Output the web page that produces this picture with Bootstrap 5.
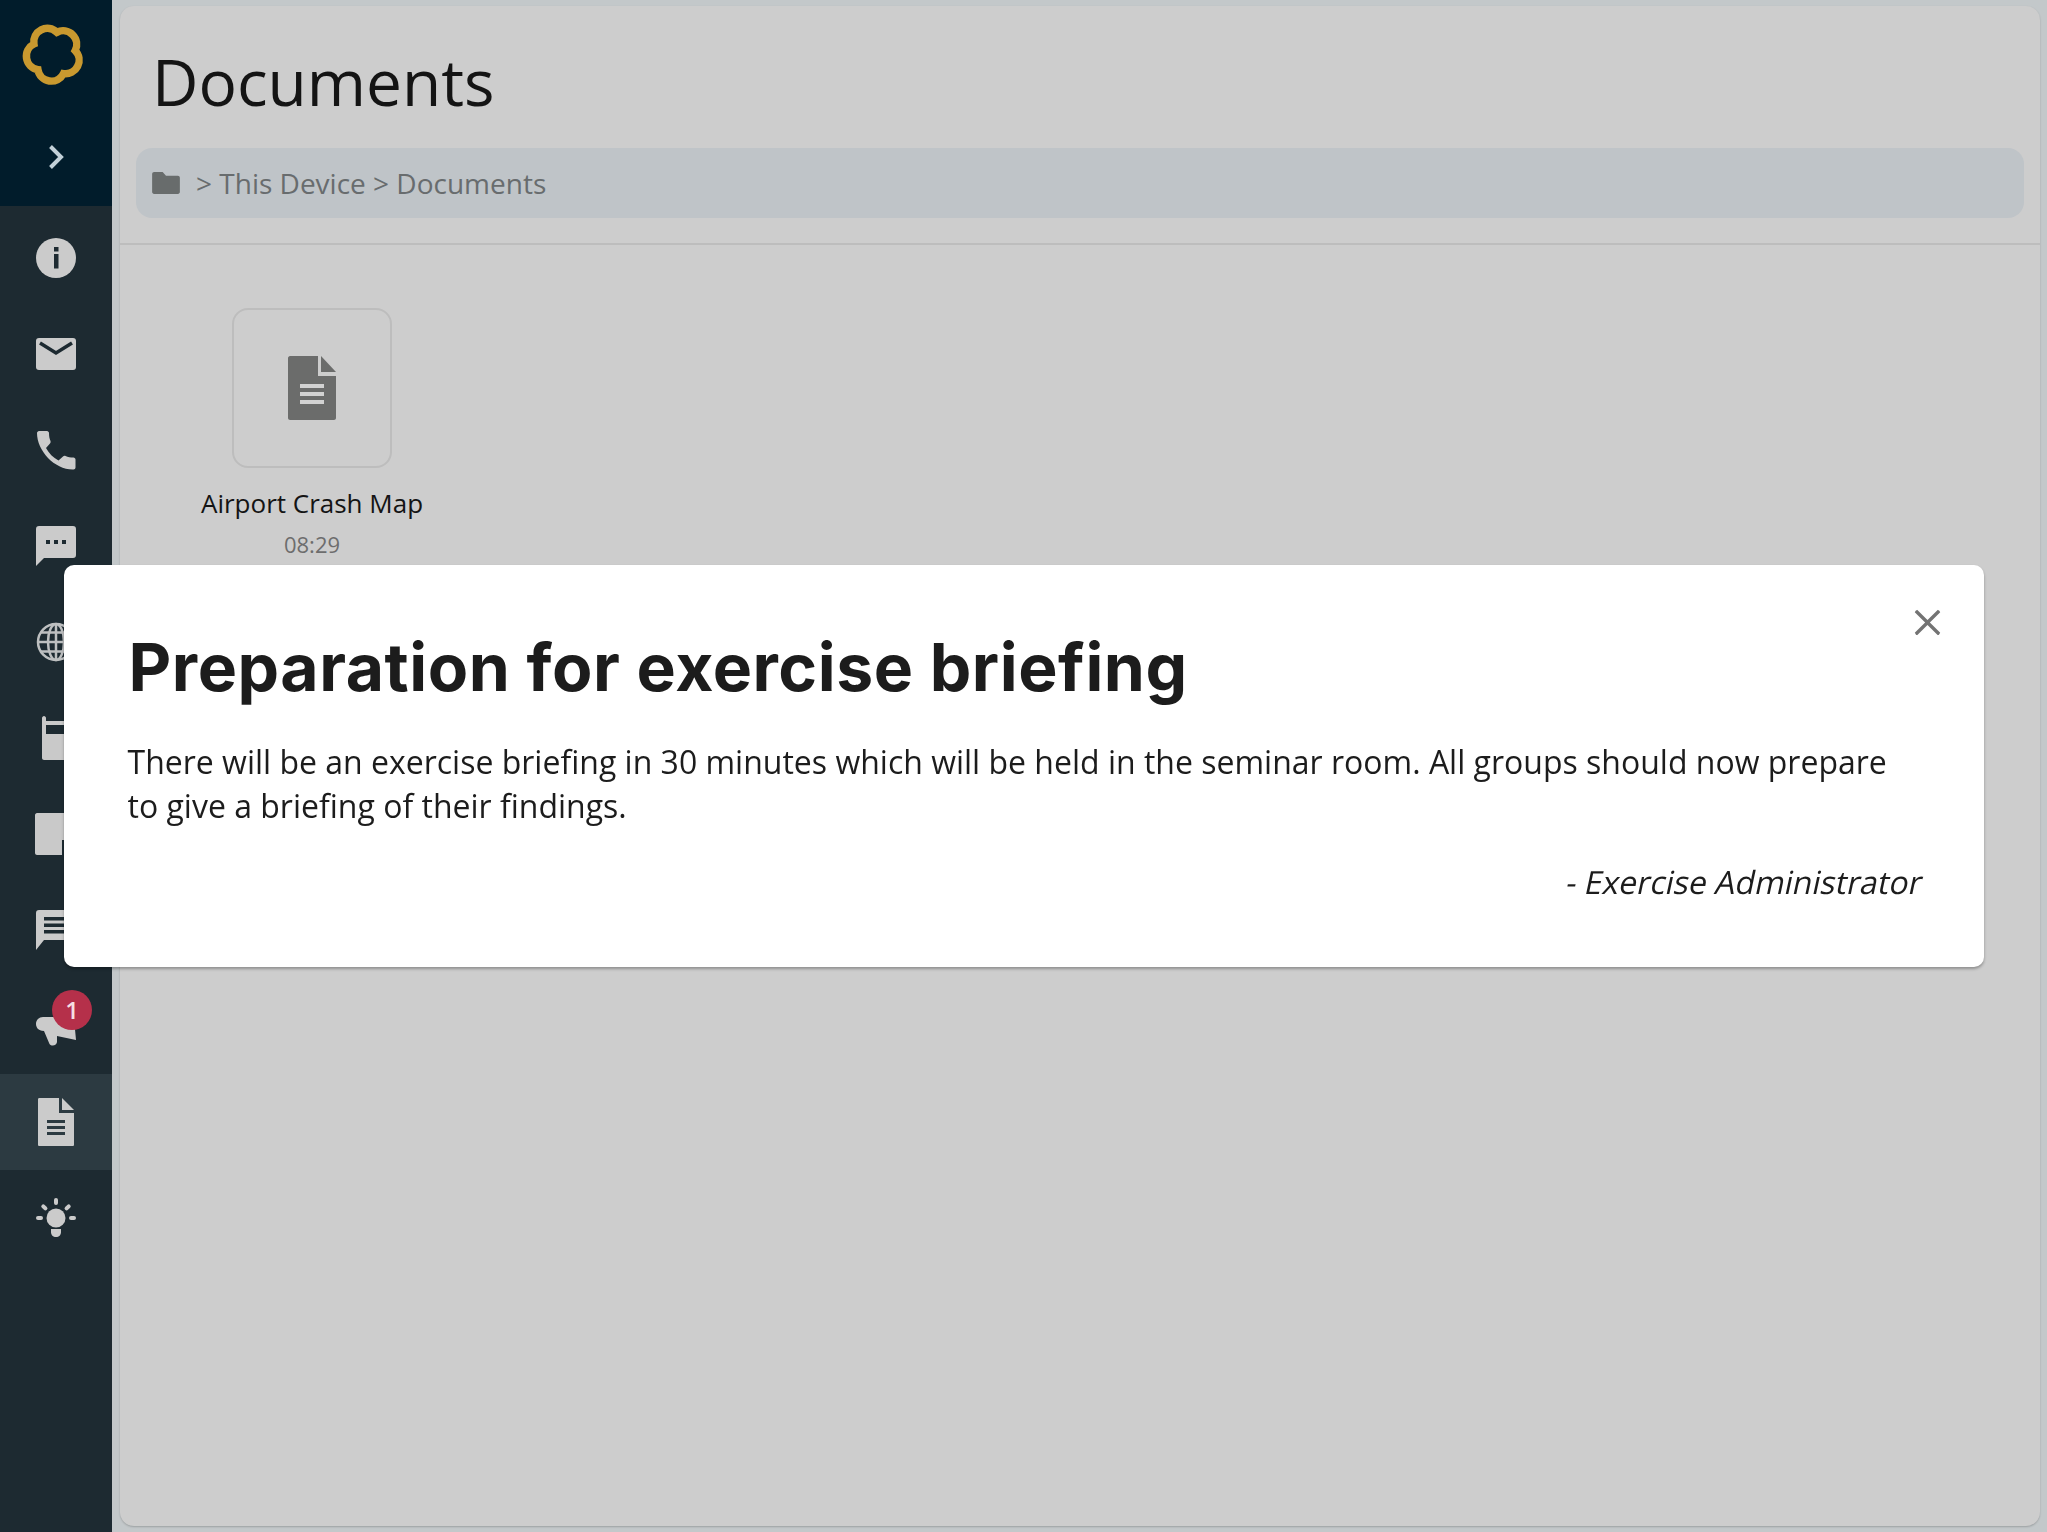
<!DOCTYPE html>
<html lang="en">
<head>
    <meta charset="UTF-8">
    <meta name="viewport" content="width=device-width, initial-scale=1.0">
    <title>Documents</title>
    <link href="https://cdn.jsdelivr.net/npm/bootstrap@5.3.3/dist/css/bootstrap.min.css" rel="stylesheet">
    <style>
        html, body {
            height: 100%;
            margin: 0;
            overflow: hidden;
        }
        body {
            background: #c3c8ca;
            font-family: "Open Sans", sans-serif;
            color: #141414;
        }
        .side-bar {
            width: 112px;
            background: #1d2a31;
        }
        .side-top {
            height: 206px;
            background: #011c2b;
        }
        .side-logo {
            width: 112px;
            height: 108px;
        }
        .side-toggle {
            height: 98px;
        }
        .side-list {
            padding-top: 4px;
        }
        .side-item {
            height: 96px;
            width: 112px;
        }
        .side-item.is-active {
            background: #2c3a41;
        }
        .side-badge {
            top: 12px;
            left: 52px;
            width: 40px;
            height: 40px;
            background: #b5304a;
            color: #f5dfe3;
            font-size: 24px;
            font-weight: 600;
        }
        .main-wrap {
            padding: 6px 7px 6px 8px;
        }
        .main-panel {
            background: #cdcdcd;
            border-radius: 14px;
            box-shadow: 0 1px 2px rgba(0, 0, 0, .2);
        }
        .page-title {
            font-family: "Open Sans", sans-serif;
            font-size: 64px;
            font-weight: 400;
            line-height: 77px;
            margin: 0;
            padding: 37px 0 28px 32px;
        }
        .crumb-bar {
            margin: 0 16px 25px;
            height: 70px;
            padding-left: 16px;
            background: #bfc4c8;
            border-radius: 16px;
            color: #686c6e;
            font-size: 28px;
        }
        .crumb-icon {
            margin-right: 16px;
        }
        .panel-rule {
            margin: 0;
            border: 0;
            border-top: 2px solid #bdbdbd;
            opacity: 1;
        }
        .file-area {
            padding: 63px 0 0 81px;
        }
        .file-cell {
            width: 222px;
        }
        .file-tile {
            width: 160px;
            height: 160px;
            border: 2px solid #bdbdbd;
            border-radius: 16px;
        }
        .file-name {
            font-size: 26px;
            line-height: 36px;
            margin-top: 17px;
            white-space: nowrap;
        }
        .file-time {
            font-size: 22px;
            line-height: 30px;
            margin-top: 8px;
            color: #6d6d6d;
        }
        .notice-dialog {
            max-width: 1920px;
            margin: 565px auto 0;
        }
        .notice-box {
            height: 402px;
            border: 0;
            border-radius: 10px;
            padding: 62px 64px 0 64px;
            box-shadow: 0 2px 3px rgba(0, 0, 0, .3);
        }
        .notice-title {
            font-family: Inter, sans-serif;
            font-size: 66px;
            font-weight: 700;
            letter-spacing: .55px;
            line-height: 80px;
            margin: 0 0 33px 1px;
            color: #1c1c1c;
        }
        .notice-text {
            font-size: 32px;
            line-height: 44px;
            margin: 0;
            color: #1c1c1c;
        }
        .notice-sign {
            font-size: 32px;
            line-height: 44px;
            margin: 32px -3px 0 0;
            color: #1c1c1c;
        }
        .notice-sign span {
            transform: skewX(-12deg);
        }
        .notice-close {
            top: 44px;
            right: 43px;
            width: 27px;
            height: 27px;
            padding: 0;
            background-size: 27px;
            opacity: .55;
        }
    </style>
</head>
<body class="d-flex">
    <aside class="side-bar flex-shrink-0 d-flex flex-column">
        <div class="side-top">
            <div class="side-logo d-flex">
                <svg width="112" height="106" viewBox="0 0 112 106" fill="none">
                    <path d="M56.900 32.300A13.600 13.600 0 0 1 75.200 50.600A13.600 13.600 0 0 1 63.500 73.600A13.600 13.600 0 0 1 37.900 69.600A13.600 13.600 0 0 1 33.900 44A13.600 13.600 0 0 1 56.900 32.300Z" stroke="#c9992f" stroke-width="7.500"/>
                </svg>
            </div>
            <div class="side-toggle d-flex align-items-center justify-content-center">
                <svg width="16" height="26" viewBox="0 0 16 26" fill="none">
                    <path d="M2.500 2.500 13 13 2.500 23.500" stroke="#c2d0d8" stroke-width="4"/>
                </svg>
            </div>
        </div>
        <nav class="side-list d-flex flex-column">
            <a class="side-item d-flex align-items-center justify-content-center">
                <svg width="40" height="40" viewBox="0 0 40 40">
                    <circle cx="20" cy="20" r="20" fill="#cbcbcb"/>
                    <rect x="18" y="9" width="4.500" height="4.500" fill="#1d2a31"/>
                    <rect x="18" y="16" width="4.500" height="14.500" fill="#1d2a31"/>
                </svg>
            </a>
            <a class="side-item d-flex align-items-center justify-content-center">
                <svg width="40" height="32" viewBox="0 0 40 32">
                    <rect width="40" height="32" rx="3" fill="#cbcbcb"/>
                    <path d="M4 5 20 15 36 5" fill="none" stroke="#1d2a31" stroke-width="3.500"/>
                </svg>
            </a>
            <a class="side-item d-flex align-items-center justify-content-center">
                <svg width="40" height="40" viewBox="0 0 40 40">
                    <path d="M3 1h8c1 0 2 1 2 2 0 3 .5 6 1.500 8 .3 1 0 2-.5 2.500l-4 4.500c3 5.500 7 9.500 12.500 12.500l4.500-4c.7-.6 1.600-.8 2.500-.5 2.500 1 5 1.500 8 1.500 1 0 2 1 2 2v8c0 1-1 2-2 2C19 40 1 21 1 3c0-1 1-2 2-2Z" fill="#cbcbcb"/>
                </svg>
            </a>
            <a class="side-item d-flex align-items-center justify-content-center">
                <svg width="40" height="40" viewBox="0 0 40 40">
                    <path d="M3 0h34c2 0 3 1 3 3v26c0 2-1 3-3 3H8l-8 8V3c0-2 1-3 3-3Z" fill="#cbcbcb"/>
                    <rect x="10" y="14" width="4" height="4" fill="#1d2a31"/>
                    <rect x="18" y="14" width="4" height="4" fill="#1d2a31"/>
                    <rect x="26" y="14" width="4" height="4" fill="#1d2a31"/>
                </svg>
            </a>
            <a class="side-item d-flex align-items-center justify-content-center">
                <svg width="40" height="40" viewBox="0 0 40 40" fill="none" stroke="#bdbfc0" stroke-width="2.500">
                    <circle cx="20" cy="20" r="18"/>
                    <ellipse cx="20" cy="20" rx="8" ry="18"/>
                    <path d="M20 2v36M2.500 20h35M5 10.500h30M5 29.500h30"/>
                </svg>
            </a>
            <a class="side-item d-flex align-items-center justify-content-center">
                <svg width="28" height="44" viewBox="0 0 28 44">
                    <path d="M0 2c0-1 1-2 2-2s2 1 2 2v3h20V2c0-1 1-2 2-2s2 1 2 2v40c0 1-1 2-2 2H2c-1 0-2-1-2-2Z" fill="#c9c9c9"/>
                    <rect x="4" y="9" width="20" height="9" fill="#1d2a31"/>
                </svg>
            </a>
            <a class="side-item d-flex align-items-center justify-content-center">
                <svg width="42" height="42" viewBox="0 0 42 42">
                    <path d="M2 0h38c1 0 2 1 2 2v26L28 42H2c-1 0-2-1-2-2V2C0 1 1 0 2 0Z" fill="#c9c9c9"/>
                    <path d="M27 42V27h15v3H30v12Z" fill="#1d2a31"/>
                </svg>
            </a>
            <a class="side-item d-flex align-items-center justify-content-center">
                <svg width="40" height="40" viewBox="0 0 40 40">
                    <path d="M3 0h34c2 0 3 1 3 3v24c0 2-1 3-3 3H8l-8 10V3c0-2 1-3 3-3Z" fill="#cbcbcb"/>
                    <path d="M8 7h24v3.500H8zM8 13.500h24V17H8zM8 20h24v3.500H8z" fill="#1d2a31"/>
                </svg>
            </a>
            <a class="side-item position-relative d-flex align-items-center justify-content-center">
                <svg width="42" height="40" viewBox="0 0 42 40">
                    <path d="M8 11H24L38 2 41 34 22 30V36C22 39 17 41 14.500 38L9 25C3 25 1 21 1 18 1 14 4 11 8 11Z" fill="#cbcbcb"/>
                </svg>
                <span class="side-badge position-absolute rounded-circle d-flex align-items-center justify-content-center">1</span>
            </a>
            <a class="side-item is-active d-flex align-items-center justify-content-center">
                <svg width="36" height="48" viewBox="0 0 36 48">
                    <path d="M1.500 0H21v15h15v31.500c0 1-.5 1.500-1.500 1.500h-33C.5 48 0 47.500 0 46.500v-45C0 .5.500 0 1.500 0Z" fill="#cbcbcb"/>
                    <path d="M24 0l12 12H24Z" fill="#cbcbcb"/>
                    <path d="M9 22h18v3H9zM9 28h18v3H9zM9 34h18v3H9z" fill="#2c3a41"/>
                </svg>
            </a>
            <a class="side-item d-flex align-items-center justify-content-center">
                <svg width="40" height="40" viewBox="0 0 40 40" fill="#cbcbcb">
                    <circle cx="20" cy="20" r="9.500"/>
                    <path d="M15 31h10v3c0 3-2 5-5 5s-5-2-5-5Z"/>
                    <rect x="18" y="0" width="4" height="7" rx="2"/>
                    <rect x="0" y="18" width="7" height="4" rx="2"/>
                    <rect x="33" y="18" width="7" height="4" rx="2"/>
                    <rect x="6" y="6" width="4" height="7" rx="2" transform="rotate(-45 8 9)"/>
                    <rect x="30" y="6" width="4" height="7" rx="2" transform="rotate(45 32 9)"/>
                </svg>
            </a>
        </nav>
    </aside>

    <main class="main-wrap flex-grow-1 d-flex">
        <div class="main-panel flex-grow-1">
            <h1 class="page-title">Documents</h1>
            <div class="crumb-bar d-flex align-items-center">
                <svg class="crumb-icon" width="28" height="22" viewBox="0 0 29 23">
                    <path d="M2 0h9l3.500 4H27c1 0 2 1 2 2v15c0 1-1 2-2 2H2c-1 0-2-1-2-2V2C0 1 1 0 2 0Z" fill="#686c6c"/>
                </svg>
                <span>&gt; This Device &gt; Documents</span>
            </div>
            <hr class="panel-rule">
            <div class="file-area d-flex">
                <div class="file-cell d-flex flex-column align-items-center text-center">
                    <div class="file-tile d-flex align-items-center justify-content-center">
                        <svg width="48" height="64" viewBox="0 0 48 64">
                            <path d="M2 0h28v20h18v42c0 1-1 2-2 2H2c-1 0-2-1-2-2V2C0 1 1 0 2 0Z" fill="#6b6c6b"/>
                            <path d="M33 0l15 16H33Z" fill="#6b6c6b"/>
                            <path d="M12 28h24v4H12zM12 36h24v4H12zM12 44h24v4H12z" fill="#d2d2d2"/>
                        </svg>
                    </div>
                    <div class="file-name">Airport Crash Map</div>
                    <div class="file-time">08:29</div>
                </div>
            </div>
        </div>
    </main>

    <div class="modal d-block" tabindex="-1">
        <div class="modal-dialog notice-dialog">
            <div class="modal-content notice-box position-relative">
                <button type="button" class="btn-close notice-close position-absolute" aria-label="Close"></button>
                <h2 class="notice-title">Preparation for exercise briefing</h2>
                <p class="notice-text">There will be an exercise briefing in 30 minutes which will be held in the seminar room. All groups should now prepare to give a briefing of their findings.</p>
                <p class="notice-sign text-end"><span class="d-inline-block">- Exercise Administrator</span></p>
            </div>
        </div>
    </div>

    <script src="https://cdn.jsdelivr.net/npm/bootstrap@5.3.3/dist/js/bootstrap.bundle.min.js"></script>
</body>
</html>
